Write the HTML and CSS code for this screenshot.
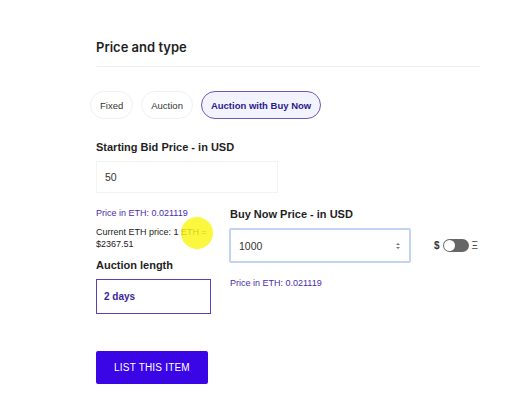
FILE: index.html
```html
<!DOCTYPE html>
<html>
<head>
<meta charset="utf-8">
<link rel="stylesheet" href="styles.css">
</head>
<body>
<div class="page">
  <h2 class="title">Price and type</h2>
  <div class="rule"></div>
  <div class="pills">
    <span class="pill">Fixed</span>
    <span class="pill">Auction</span>
    <span class="pill active">Auction with Buy Now</span>
  </div>
  <div class="label first">Starting Bid Price - in USD</div>
  <div class="input plain">50</div>
  <div class="cols">
    <div class="left">
      <div class="eth">Price in ETH: 0.021119</div>
      <div class="current">Current ETH price: 1 ETH = $2367.51</div>
      <div class="label len">Auction length</div>
      <div class="select">2 days</div>
    </div>
    <div class="right">
      <div class="label">Buy Now Price - in USD</div>
      <div class="row">
        <div class="input focus"><span>1000</span>
          <svg class="spin" width="6" height="10" viewBox="0 0 6 10"><path d="M1 4 L3 2 L5 4 Z M1 6 L3 8 L5 6 Z" fill="#777"/></svg>
        </div>
        <div class="toggle">
          <span class="cur">$</span>
          <span class="switch"><span class="knob"></span></span>
          <span class="xi">Ξ</span>
        </div>
      </div>
      <div class="eth eth2">Price in ETH: 0.021119</div>
    </div>
  </div>
  <button class="btn">LIST THIS ITEM</button>
</div>
<div class="cursor"></div>
</body>
</html>
```
FILE: styles.css
```css
html, body {
  margin: 0;
  padding: 0;
  background: #fff;
}
body {
  font-family: "Liberation Sans", Arial, sans-serif;
  color: #1a1a1a;
  position: relative;
  width: 529px;
  height: 402px;
  overflow: hidden;
}
.page {
  padding: 39px 0 0 96px;
  width: 384px;
}
.title {
  margin: 0;
  font-family: Inter, "Liberation Sans", sans-serif;
  font-size: 13px;
  font-weight: 600;
  line-height: 16px;
  color: #1f1f1f;
}
.rule {
  height: 1px;
  background: #ececec;
  margin-top: 11px;
}
.pills {
  display: flex;
  gap: 8px;
  margin: 24px 0 0 -6px;
}
.pill {
  display: inline-flex;
  align-items: center;
  height: 26px;
  padding: 0 9px;
  border: 1px solid #f0f0f0;
  border-radius: 14px;
  font-size: 9.5px;
  color: #333;
}
.pill.active {
  border-color: #6a5ab8;
  background: #f2f3ff;
  color: #2a1a8c;
  font-weight: bold;
  padding: 0 9px;
}
.label {
  font-size: 11px;
  font-weight: bold;
  color: #1f1f1f;
  line-height: 14px;
}
.label.first {
  margin-top: 21px;
}
.input {
  box-sizing: border-box;
  display: flex;
  align-items: center;
  font-size: 10.5px;
  color: #333;
}
.input.plain {
  width: 182px;
  height: 32px;
  margin-top: 7px;
  padding-left: 8px;
  border: 1px solid #f3f3f3;
}
.cols {
  display: flex;
  gap: 19px;
  margin-top: 14px;
}
.left {
  width: 115px;
}
.eth {
  font-size: 9px;
  color: #4a2bb0;
  line-height: 12px;
}
.current {
  margin-top: 7px;
  font-size: 9px;
  line-height: 12px;
  color: #222;
}
.label.len {
  margin-top: 8px;
}
.select {
  box-sizing: border-box;
  margin-top: 7px;
  width: 115px;
  height: 35px;
  border: 1px solid #5b3fb5;
  display: flex;
  align-items: center;
  padding-left: 7px;
  font-size: 10px;
  font-weight: bold;
  color: #3a1f9a;
}
.right {
  display: flex;
  flex-direction: column;
}
.row {
  display: flex;
  align-items: center;
  margin-top: 7px;
}
.input.focus {
  width: 182px;
  height: 35px;
  margin-left: -1px;
  padding: 0 8px 0 8px;
  border: 2px solid #c5d3f3;
  border-radius: 2px;
  justify-content: space-between;
}
.toggle {
  display: flex;
  align-items: center;
  margin-left: 23px;
  gap: 3px;
}
.cur {
  font-size: 10px;
  font-weight: bold;
  color: #333;
}
.switch {
  position: relative;
  width: 26px;
  height: 13px;
  border-radius: 7px;
  background: #666;
  display: inline-block;
}
.knob {
  position: absolute;
  left: 1px;
  top: 1px;
  width: 11px;
  height: 11px;
  border-radius: 50%;
  background: #fff;
}
.xi {
  font-size: 10px;
  color: #444;
}
.eth2 {
  margin-top: 14px;
}
.btn {
  margin-top: 37px;
  width: 112px;
  height: 33px;
  border: none;
  border-radius: 2px;
  background: #3a06e6;
  color: #fff;
  font-family: "Liberation Sans", Arial, sans-serif;
  font-size: 10px;
  letter-spacing: 0.2px;
  display: block;
}
.cursor {
  position: absolute;
  left: 181px;
  top: 217px;
  width: 32px;
  height: 32px;
  border-radius: 50%;
  background: rgba(250, 245, 20, 0.82);
}
```
